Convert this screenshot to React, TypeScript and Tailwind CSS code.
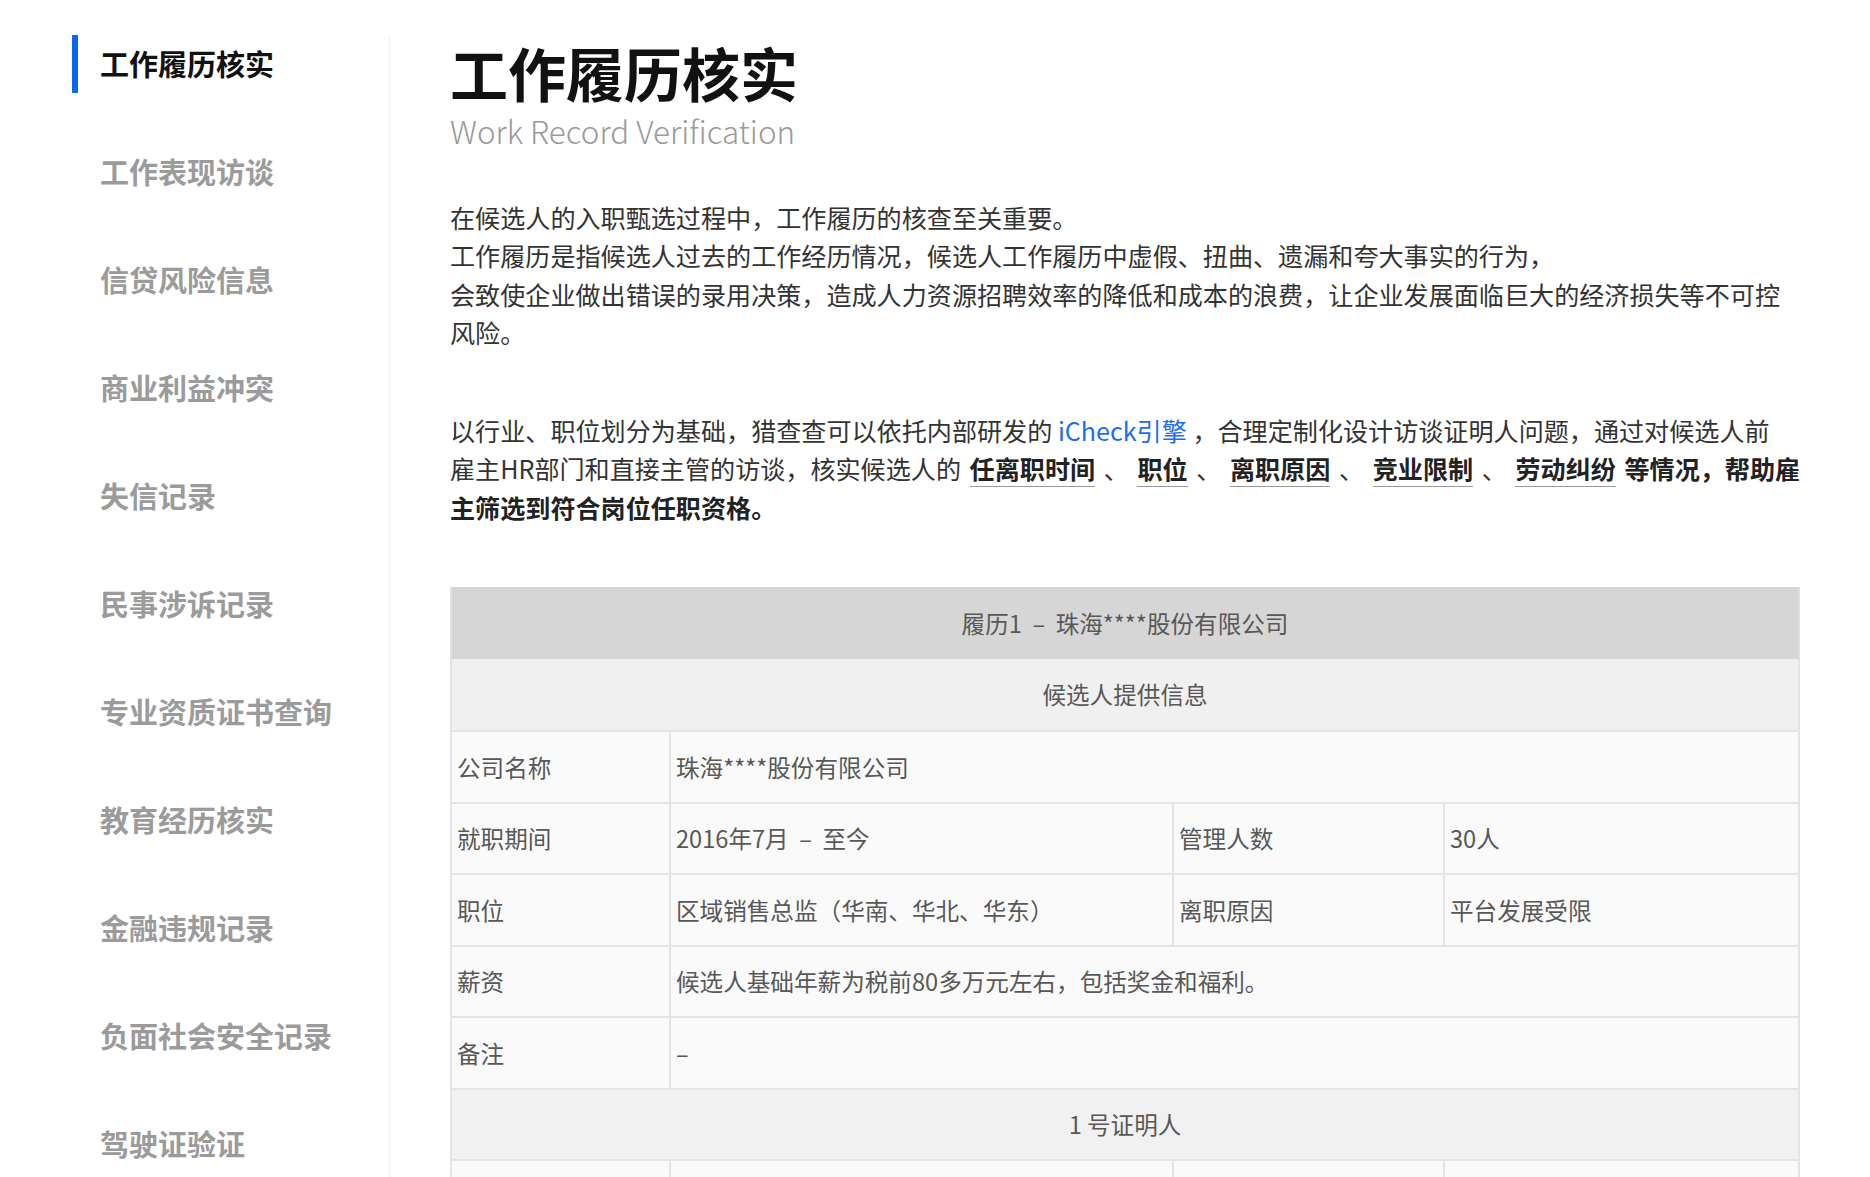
import React from "react";

const NAV = [
  "工作履历核实",
  "工作表现访谈",
  "信贷风险信息",
  "商业利益冲突",
  "失信记录",
  "民事涉诉记录",
  "专业资质证书查询",
  "教育经历核实",
  "金融违规记录",
  "负面社会安全记录",
  "驾驶证验证",
];

const FONT = { fontFamily: '"Noto Sans CJK SC", "Noto Sans", sans-serif' };

function Term({ children }: { children: React.ReactNode }) {
  return (
    <span className="mx-[3px] inline-block border-b-[1.5px] border-[#9a9a9a] pb-[3px] font-bold leading-[30px] text-[#222]">
      {children}
    </span>
  );
}

function Sidebar() {
  return (
    <aside className="mt-[35px] w-[390px] shrink-0 border-r border-[#f1f1f1] pl-[72px]">
      <ul className="flex flex-col gap-[50px]">
        {NAV.map((item, i) => (
          <li
            key={item}
            className={
              i === 0
                ? "flex h-[58px] items-center border-l-[6px] border-[#0a66f5] pl-[22px] text-[29px] font-bold text-[#111]"
                : "flex h-[58px] items-center border-l-[6px] border-transparent pl-[22px] text-[29px] font-bold text-[#9b9b9b]"
            }
          >
            {item}
          </li>
        ))}
      </ul>
    </aside>
  );
}

const cell = "border-2 border-[#e4e4e4] px-[5px] text-left align-middle font-normal";

function RecordTable() {
  return (
    <table className="w-full table-fixed border-collapse text-[23.6px] text-[#585858]">
      <colgroup>
        <col className="w-[219px]" />
        <col className="w-[503px]" />
        <col className="w-[271px]" />
        <col className="w-[355px]" />
      </colgroup>
      <tbody>
        <tr className="h-[72px] bg-[#d6d6d6]">
          <th colSpan={4} className="border-x-2 border-[#e0e0e0] text-center font-normal">
            履历1 &nbsp;– &nbsp;珠海****股份有限公司
          </th>
        </tr>
        <tr className="h-[72px] bg-[#f0f0f0]">
          <th colSpan={4} className="border-x-2 border-b-2 border-[#e4e4e4] text-center font-normal">
            候选人提供信息
          </th>
        </tr>
        <tr className="h-[72px] bg-[#fafafa]">
          <td className={cell}>公司名称</td>
          <td colSpan={3} className={cell}>
            珠海****股份有限公司
          </td>
        </tr>
        <tr className="h-[71px] bg-[#fafafa]">
          <td className={cell}>就职期间</td>
          <td className={cell}>2016年7月 &nbsp;– &nbsp;至今</td>
          <td className={cell}>管理人数</td>
          <td className={cell}>30人</td>
        </tr>
        <tr className="h-[72px] bg-[#fafafa]">
          <td className={cell}>职位</td>
          <td className={cell}>区域销售总监（华南、华北、华东）</td>
          <td className={cell}>离职原因</td>
          <td className={cell}>平台发展受限</td>
        </tr>
        <tr className="h-[71px] bg-[#fafafa]">
          <td className={cell}>薪资</td>
          <td colSpan={3} className={cell}>
            候选人基础年薪为税前80多万元左右，包括奖金和福利。
          </td>
        </tr>
        <tr className="h-[72px] bg-[#fafafa]">
          <td className={cell}>备注</td>
          <td colSpan={3} className={cell}>
            –
          </td>
        </tr>
        <tr className="h-[71px] bg-[#f1f1f1]">
          <th colSpan={4} className="border-2 border-[#e4e4e4] text-center font-normal">
            1 号证明人
          </th>
        </tr>
        <tr className="h-[72px] bg-[#fafafa]">
          <td className={cell}>姓名</td>
          <td className={cell}>张**</td>
          <td className={cell}>职位</td>
          <td className={cell}>销售副总裁</td>
        </tr>
        <tr className="h-[72px] bg-[#fafafa]">
          <td className={cell}>关系</td>
          <td colSpan={3} className={cell}>
            直接上级
          </td>
        </tr>
      </tbody>
    </table>
  );
}

export default function App() {
  return (
    <div className="flex min-h-screen bg-white" style={FONT}>
      <Sidebar />
      <main className="min-w-0 flex-1 pl-[60px] pr-[72px] pt-[43px]">
        <h1 className="text-[58px] font-bold leading-[58px] text-[#111]">工作履历核实</h1>
        <p className="mt-[13px] text-[31.4px] font-light leading-[34px] text-[#9a9a9a]">
          Work Record Verification
        </p>

        <div className="mt-[50px] text-[25.1px] leading-[38.4px] text-[#333]">
          <div className="whitespace-nowrap">在候选人的入职甄选过程中，工作履历的核查至关重要。</div>
          <div className="whitespace-nowrap">
            工作履历是指候选人过去的工作经历情况，候选人工作履历中虚假、扭曲、遗漏和夸大事实的行为，
          </div>
          <div className="whitespace-nowrap">
            会致使企业做出错误的录用决策，造成人力资源招聘效率的降低和成本的浪费，让企业发展面临巨大的经济损失等不可控
          </div>
          <div className="whitespace-nowrap">风险。</div>
        </div>

        <div className="mt-[59px] text-[25.1px] leading-[38.4px] text-[#333]">
          <div className="whitespace-nowrap">
            以行业、职位划分为基础，猎查查可以依托内部研发的{" "}
            <span className="text-[#1a6ef5]">iCheck引擎</span>{" "}
            ，合理定制化设计访谈证明人问题，通过对候选人前
          </div>
          <div className="whitespace-nowrap">
            雇主HR部门和直接主管的访谈，核实候选人的 <Term>任离职时间</Term> 、 <Term>职位</Term> 、{" "}
            <Term>离职原因</Term> 、 <Term>竞业限制</Term> 、 <Term>劳动纠纷</Term>{" "}
            <span className="font-bold text-[#222]">等情况，帮助雇</span>
          </div>
          <div className="whitespace-nowrap font-bold leading-[40px] text-[#222]">
            主筛选到符合岗位任职资格。
          </div>
        </div>

        <div className="mt-[60px]">
          <RecordTable />
        </div>
      </main>
    </div>
  );
}
